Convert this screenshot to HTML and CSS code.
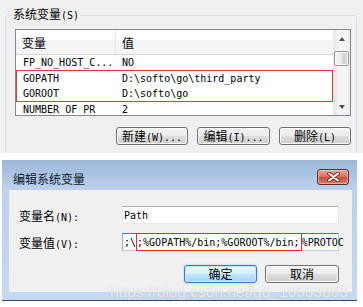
FILE: index.html
```html
<!DOCTYPE html>
<html lang="zh">
<head>
  <meta charset="UTF-8">
  <title>系统变量</title>
  <link rel="stylesheet" href="styles.css">
</head>
<body>

  <div class="sys-panel">
    <fieldset class="group">
      <legend>系统变量<span class="lat">(S)</span></legend>
      <div class="listview">
        <div class="lv-main">
          <div class="lv-head">
            <div class="col-name">变量</div>
            <div class="col-value">值</div>
          </div>
          <div class="lv-row"><span class="col-name">FP_NO_HOST_C...</span><span class="col-value">NO</span></div>
          <div class="marked">
            <div class="lv-row"><span class="col-name">GOPATH</span><span class="col-value">D:\softo\go\third_party</span></div>
            <div class="lv-row"><span class="col-name">GOROOT</span><span class="col-value">D:\softo\go</span></div>
          </div>
          <div class="lv-row"><span class="col-name">NUMBER_OF_PR</span><span class="col-value">2</span></div>
        </div>
        <div class="scrollbar">
          <div class="sb-arrow"><span class="tri up"></span></div>
          <div class="sb-thumb"></div>
          <div class="sb-track"></div>
          <div class="sb-arrow"><span class="tri down"></span></div>
        </div>
      </div>
      <div class="btn-row">
        <button class="btn w72">新建<span class="lat">(W)...</span></button>
        <button class="btn w73">编辑<span class="lat">(I)...</span></button>
        <button class="btn w72">删除<span class="lat">(L)</span></button>
      </div>
    </fieldset>
  </div>

  <div class="dialog-area">
    <div class="dialog">
      <div class="title-bar">
        <div class="title">编辑系统变量</div>
        <div class="close">
          <svg width="13" height="10" viewBox="0 0 13 10">
            <path d="M2 1.5 L11 8.5 M11 1.5 L2 8.5" stroke="#5a2a22" stroke-width="3.6" stroke-linecap="round"/>
            <path d="M2 1.5 L11 8.5 M11 1.5 L2 8.5" stroke="#ffffff" stroke-width="2" stroke-linecap="round"/>
          </svg>
        </div>
      </div>
      <div class="dialog-frame">
        <div class="dialog-body">
          <div class="field-row">
            <label class="field-label">变量名<span class="lat">(N):</span></label>
            <div class="field lat">Path</div>
          </div>
          <div class="field-row">
            <label class="field-label">变量值<span class="lat">(V):</span></label>
            <div class="field focus lat"><span>;\</span><span class="hl">;%GOPATH%/bin;%GOROOT%/bin;</span><span>%PROTOC</span></div>
          </div>
          <div class="dlg-buttons">
            <button class="btn default w73">确定</button>
            <button class="btn w74">取消</button>
          </div>
        </div>
      </div>
    </div>
    <div class="watermark">https://blog.csdn.net/qq_16553883</div>
  </div>

</body>
</html>
```

FILE: styles.css
```css
* {
  box-sizing: border-box;
}
body {
  margin: 0;
  width: 363px;
  height: 307px;
  overflow: hidden;
  background: #fff;
  font-family: "Noto Sans CJK SC", sans-serif;
  font-size: 12px;
  color: #000;
}
.lat {
  font-family: "DejaVu Sans Mono", monospace;
  font-size: 10px;
}

/* top: system variables group */
.sys-panel {
  height: 153px;
  overflow: hidden;
  background: #f0f0f0;
  padding: 6px 6px 0 5px;
}
.group {
  margin: 0;
  height: 200px;
  border: 1px solid #d5dfe5;
  border-radius: 3px;
  padding: 0 5px 0 6px;
}
.group legend {
  padding: 0 1px;
  line-height: 16px;
}
.listview {
  display: flex;
  margin: 5px 0 0 3px;
  height: 87px;
  border: 1px solid #828790;
  background: #fff;
}
.lv-main {
  flex-grow: 1;
  overflow: hidden;
}
.lv-head {
  display: flex;
  height: 25px;
  padding-top: 4px;
  border-bottom: 1px solid #d5d5d5;
  background: linear-gradient(#ffffff 0, #ffffff 42%, #f3f4f6 42%, #f3f4f6 100%);
}
.lv-head .col-name {
  border-right: 1px solid #e3e8ee;
  margin-top: -4px;
  padding-top: 4px;
}
.col-name {
  width: 100px;
  flex-shrink: 0;
  padding-left: 6px;
}
.col-value {
  padding-left: 6px;
}
.lv-row {
  display: flex;
  height: 15.5px;
  line-height: 15.5px;
  font-family: "DejaVu Sans Mono", monospace;
  font-size: 10px;
  white-space: nowrap;
}
.lv-row .col-name {
  padding-left: 7px;
}
.marked {
  margin-top: -1px;
  padding-top: 1px;
  outline: 1px solid #e8363a;
  outline-offset: -1px;
}
.scrollbar {
  width: 17px;
  display: flex;
  flex-direction: column;
  border-left: 1px solid #e9e9e9;
  background: linear-gradient(to right, #e6e6e6, #f5f5f5 30%, #f5f5f5 70%, #ececec);
}
.sb-arrow {
  height: 17px;
  display: flex;
  align-items: center;
  justify-content: center;
}
.tri {
  width: 0;
  height: 0;
  border-left: 3.5px solid transparent;
  border-right: 3.5px solid transparent;
}
.tri.up {
  border-bottom: 4px solid #4f4f4f;
}
.tri.down {
  border-top: 4px solid #4f4f4f;
}
.sb-thumb {
  margin: 4px 1px 0 0;
  height: 15px;
  border: 1px solid #979797;
  border-radius: 2px;
  background: linear-gradient(to right, #f4f4f4, #e9e9e9 50%, #d8d8d8 50%, #d2d2d2);
  box-shadow: inset 0 0 0 1px #fbfbfb;
}
.sb-track {
  flex-grow: 1;
}
.btn-row {
  display: flex;
  justify-content: flex-end;
  gap: 9px;
  margin: 11px 0 0 0;
}

/* buttons */
.btn {
  height: 18px;
  padding: 0;
  border: 1px solid #707070;
  border-radius: 3px;
  background: linear-gradient(#f2f2f2 0, #ebebeb 50%, #dddddd 50%, #cfcfcf 100%);
  box-shadow: inset 0 0 0 1px #fbfbfb;
  font-family: "Noto Sans CJK SC", sans-serif;
  font-size: 12px;
  line-height: 16px;
  color: #000;
}
.w72 { width: 72px; }
.w73 { width: 73px; }
.w74 { width: 74px; }
.btn.default {
  border-color: #3c7fb1;
  background: linear-gradient(#eaf6fd 0, #d9f0fc 50%, #bee6fd 50%, #a7d9f5 100%);
  box-shadow: inset 0 0 0 1px #c2e6fa, 0 0 2px #7fc4ec;
}

/* bottom: edit dialog */
.dialog-area {
  position: relative;
  padding: 7px 6px 0 2px;
}
.dialog {
  background: linear-gradient(#9db8da 0, #bcd1ec 30px, #c6d9f0 100%);
  border-bottom: 1px solid #3a4a58;
}
.title-bar {
  display: flex;
  justify-content: space-between;
  height: 30px;
  padding: 0 8px 0 11px;
}
.title {
  margin-top: 10px;
  line-height: 17px;
  color: #0b1a2c;
}
.close {
  margin-top: 9px;
  width: 32px;
  height: 16px;
  display: flex;
  align-items: center;
  justify-content: center;
  border: 1px solid #5f2c2a;
  border-radius: 3px;
  background: linear-gradient(#e8a899 0, #d77866 45%, #c4503b 55%, #d2826f 100%);
  box-shadow: inset 0 0 0 1px rgba(255, 220, 210, 0.5);
}
.dialog-frame {
  padding: 0 5px 8px 7px;
}
.dialog-body {
  height: 102px;
  background: #f0f0f0;
  padding: 16px 13px 0 10px;
}
.field-row {
  display: flex;
  align-items: center;
  margin-bottom: 9px;
}
.field-label {
  width: 103px;
}
.field {
  width: 217px;
  height: 18px;
  display: flex;
  align-items: center;
  padding-left: 1px;
  background: #fff;
  border: 1px solid #e3e9ef;
  border-top-color: #abadb3;
  white-space: nowrap;
}
.field.focus {
  border-color: #b5cfe7;
  border-top-color: #3d7bad;
  border-left-color: #8fb4d8;
  align-items: stretch;
}
.field.focus span {
  display: flex;
  align-items: center;
}
.field .hl {
  margin: -1px 0;
  padding: 0 1px 0 0;
  border: 1px solid #e8262d;
}
.dlg-buttons {
  display: flex;
  justify-content: flex-end;
  gap: 8px;
  margin-top: 14px;
}
.watermark {
  position: absolute;
  left: 110px;
  top: 131px;
  font-family: "Liberation Sans", sans-serif;
  font-size: 15.5px;
  line-height: 16px;
  color: rgba(255, 255, 255, 0.7);
  text-shadow: 0 0 1px rgba(120, 120, 120, 0.35);
  white-space: nowrap;
}
```
